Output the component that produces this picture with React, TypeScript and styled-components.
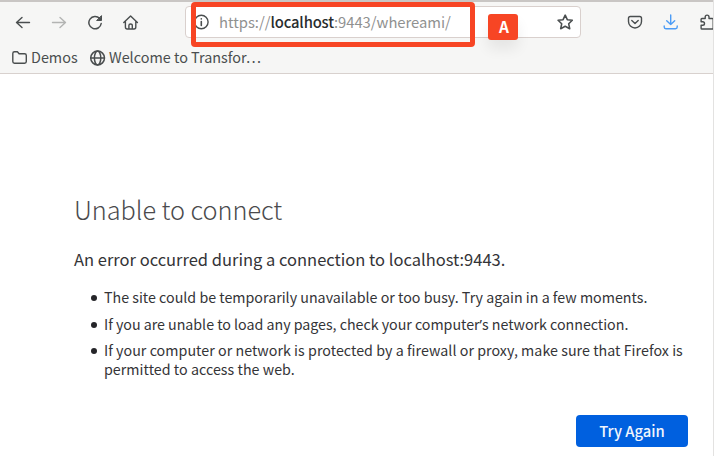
import React from "react";
import styled, { createGlobalStyle } from "styled-components";

const Global = createGlobalStyle`
  * { box-sizing: border-box; }
  body { margin: 0; background: #fff; overflow: hidden; font-family: "Noto Sans CJK SC", "Noto Sans", sans-serif; }
`;

const Window = styled.div`
  width: 714px;
  height: 456px;
  position: relative;
  overflow: hidden;
  display: flex;
  flex-direction: column;
  background: #fff;
  border-right: 1px solid #e3e2e1;
`;

const Chrome = styled.header`
  height: 74px;
  flex: none;
  background: #f6f6f5;
  border-top: 2px solid #c9c6c4;
  border-bottom: 1px solid #d8d1ce;
  overflow: hidden;
`;

const NavBar = styled.div`
  height: 40px;
  display: flex;
  align-items: center;
  padding-left: 15px;
`;

const IconSlot = styled.span<{ $w?: number; $color?: string }>`
  width: ${(p) => p.$w ?? 36}px;
  flex: none;
  display: flex;
  color: ${(p) => p.$color ?? "#4a4e4f"};
  svg { display: block; flex: none; }
`;

const AddressBar = styled.div`
  width: 396px;
  height: 32px;
  flex: none;
  margin: 0 46px 0 26px;
  padding: 0 7px 0 8px;
  display: flex;
  align-items: center;
  background: #fff;
  border: 1px solid #d9d0cd;
  border-radius: 4px;
`;

const Url = styled.span`
  flex: 1;
  margin-left: 9px;
  font-size: 14.8px;
  line-height: 24px;
  color: #909190;
  white-space: nowrap;
  letter-spacing: -0.02px;
  b { font-weight: 500; letter-spacing: -0.15px; color: #292d2e; }
`;

const Bookmarks = styled.div`
  height: 29px;
  display: flex;
  align-items: center;
  padding-left: 11px;
  color: #4a4e4f;
`;

const Bookmark = styled.span<{ $w: number }>`
  width: ${(p) => p.$w}px;
  display: flex;
  align-items: center;
  gap: 3px;
  font-size: 14.4px;
  line-height: 24px;
  white-space: nowrap;
  svg { flex: none; margin-top: 1px; }
`;

const Page = styled.main`
  padding: 116px 25px 0 74px;
  color: #343437;
`;

const Title = styled.h1`
  margin: 0;
  font-size: 25.3px;
  line-height: 38px;
  font-weight: 300;
  letter-spacing: -0.05px;
  color: #4a4a4d;
`;

const Lead = styled.p`
  margin: 18px 0 0;
  font-size: 16.5px;
  line-height: 26px;
  white-space: nowrap;
`;

const Reasons = styled.ul`
  margin: 15px 0 0;
  padding: 0;
  list-style: none;
`;

const Reason = styled.li<{ $tracking?: number }>`
  display: flex;
  font-size: 14.25px;
  line-height: 19px;
  letter-spacing: ${(p) => p.$tracking ?? 0}px;
  margin-bottom: 7.5px;
  white-space: nowrap;
  &::before {
    content: "";
    width: 6px;
    height: 6px;
    flex: none;
    margin: 8px 7px 0 17px;
    border-radius: 50%;
    background: #252529;
  }
`;

const Apostrophe = styled.span`
  font-family: "Noto Sans", sans-serif;
  line-height: 1;
`;

const Actions = styled.div`
  display: flex;
  justify-content: flex-end;
  margin-top: 37px;
`;

const RetryButton = styled.button`
  width: 112px;
  height: 32px;
  padding: 0;
  border: 0;
  border-radius: 4px;
  background: #0060df;
  color: #f1f5fc;
  font: 500 14.8px/32px "Noto Sans CJK SC", "Noto Sans", sans-serif;
`;

const Highlight = styled.div`
  position: absolute;
  left: 191px;
  top: 2px;
  width: 284px;
  height: 45px;
  border: 5px solid #f74524;
  border-radius: 4px;
`;

const Marker = styled.div`
  position: absolute;
  left: 488px;
  top: 14px;
  width: 30px;
  height: 26px;
  padding-left: 2px;
  border-radius: 3px;
  background: #f74524;
  color: #fff;
  font: 700 15.5px/25px "Noto Sans CJK SC", sans-serif;
  text-align: center;
  box-shadow: 0 9px 14px rgba(0, 0, 0, 0.07);
`;

const Svg = ({ w = 16, sw = 1.4, children }: { w?: number; sw?: number; children: React.ReactNode }) => (
  <svg width={w} height={w} viewBox={`0 0 ${w} ${w}`} fill="none" stroke="currentColor" strokeWidth={sw} strokeLinecap="round" strokeLinejoin="round">
    {children}
  </svg>
);

export default function App() {
  return (
    <>
      <Global />
      <Window>
        <Chrome>
          <NavBar>
            <IconSlot><Svg><path d="M14.500 8.500H1.500M7 3.500 1.500 8.500 7 13.500" /></Svg></IconSlot>
            <IconSlot $color="#b3b4b3"><Svg><path d="M1.500 8.500h13M9 3.500l5.500 5-5.500 5" /></Svg></IconSlot>
            <IconSlot><Svg sw={1.500}><path d="M12.700 4.500A6.200 6.200 0 1 0 14.200 9.500" /><path d="M14.500 2V6.500H10Z" fill="currentColor" strokeWidth="1" /></Svg></IconSlot>
            <IconSlot><Svg sw={1.400}><path d="M.8 8.500 7.600 2l6.800 6.500M2.400 7.300V13q0 2 1.800 2h6.800q1.800 0 1.800-2V7.300M5.900 15v-3.500q0-1.500 1.700-1.500t1.700 1.500V15" /></Svg></IconSlot>
            <AddressBar>
              <IconSlot $w={16}>
                <Svg><circle cx="7.300" cy="8" r="6.800" /><path d="M7.300 7.500v4M7.300 4.700v.2" strokeWidth="1.600" /></Svg>
              </IconSlot>
              <Url>https://<b>localhost</b>:9443/whereami/</Url>
              <IconSlot $w={16}>
                <Svg sw={1.600}><path d="m8.200 1.200 2.100 4.500 5 .6-3.600 3.500 1 4.900-4.500-2.400-4.500 2.400 1-4.900L1.100 6.300l5-.6Z" /></Svg>
              </IconSlot>
            </AddressBar>
            <IconSlot><Svg><path d="M3.300 2.500h9.400Q14.500 2.500 14.500 4.300v3.200a6.500 6.500 0 0 1-13 0V4.300q0-1.800 1.800-1.800ZM4.800 6.600 8 9.600l3.200-3" /></Svg></IconSlot>
            <IconSlot $color="#4c9cf5"><Svg><path d="M7.700 1v9.500M3.700 6.700l4 3.900 4-3.900M1.200 12v1q0 1.700 1.700 1.700h9.600q1.700 0 1.700-1.700v-1" /></Svg></IconSlot>
            <IconSlot $w={16}><Svg><path d="M2.900 15q-.8 0-.8-.8V11.300H3.700a1.800 1.800 0 0 0 0-3.600H2.100V5.300q0-.8.8-.8H6.200V3a1.900 1.900 0 0 1 3.800 0v1.500h3.400q.8 0 .8.800V15Z" /></Svg></IconSlot>
          </NavBar>
          <Bookmarks>
            <Bookmark $w={78}><Svg w={17}><path d="M1.800 12.500v-8q0-1.700 1.700-1.700h2.900l1.700 2h5.500q1.700 0 1.700 1.700v6q0 1.700-1.700 1.700H3.500q-1.700 0-1.700-1.700Z" /></Svg>Demos</Bookmark>
            <Bookmark $w={190}><Svg w={17} sw={1.500}><circle cx="8.600" cy="9" r="6.900" /><ellipse cx="8.600" cy="9" rx="3.200" ry="6.900" /><path d="M2 9h13" /></Svg>Welcome to Transfor…</Bookmark>
          </Bookmarks>
        </Chrome>
        <Page>
          <Title>Unable to connect</Title>
          <Lead>An error occurred during a connection to localhost:9443.</Lead>
          <Reasons>
            <Reason>The site could be temporarily unavailable or too busy. Try again in a few moments.</Reason>
            <Reason $tracking={-0.025}><span>If you are unable to load any pages, check your computer<Apostrophe>’</Apostrophe>s network connection.</span></Reason>
            <Reason $tracking={0.035}>If your computer or network is protected by a firewall or proxy, make sure that Firefox is<br />permitted to access the web.</Reason>
          </Reasons>
          <Actions><RetryButton>Try Again</RetryButton></Actions>
        </Page>
        <Highlight />
        <Marker>A</Marker>
      </Window>
    </>
  );
}
